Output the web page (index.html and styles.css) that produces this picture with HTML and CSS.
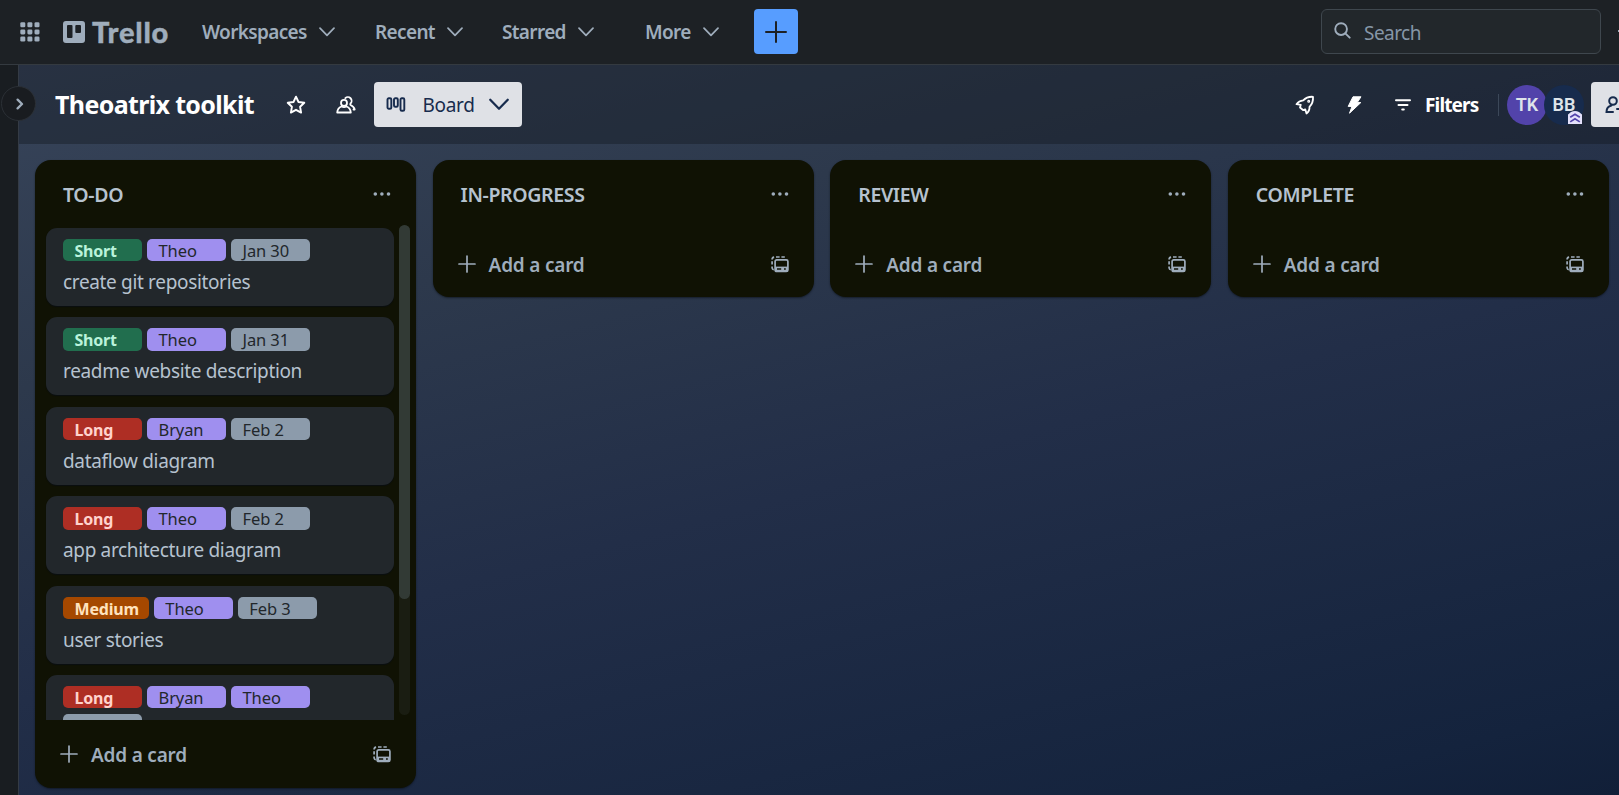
FILE: index.html
```html
<!DOCTYPE html>
<html lang="en">
<head>
<meta charset="utf-8">
<title>Theoatrix toolkit | Trello</title>
<link rel="stylesheet" href="styles.css">
</head>
<body>
<svg class="defs" width="0" height="0">
  <symbol id="chevron" viewBox="0 0 16 10"><path d="M1 1.200l7 7.200 7-7.200" fill="none" stroke="currentColor" stroke-linecap="round" stroke-linejoin="round"/></symbol>
  <symbol id="plus" viewBox="0 0 18 18"><path d="M9 1v16M1 9h16" fill="none" stroke="currentColor" stroke-width="1.700" stroke-linecap="round"/></symbol>
  <symbol id="dots" viewBox="0 0 18 6"><g fill="currentColor"><circle cx="2.300" cy="3" r="1.800"/><circle cx="8.900" cy="3" r="1.800"/><circle cx="15.500" cy="3" r="1.800"/></g></symbol>
  <symbol id="template" viewBox="0 0 18 17"><g fill="none" stroke="currentColor"><path d="M1.100 3.400q0-2 2-2.300M5 1h3.600M10.400 1h3.400M1.100 5.300v3.300M1.100 10.400v1.600q.2 1.500 1.700 1.700" stroke-width="1.700"/><rect x="4.100" y="3.900" width="12.800" height="11.600" rx="1.600" stroke-width="1.700"/></g><path d="M4 10.600h13v4.900H4z" fill="currentColor"/><path d="M6 13h4.200M13 13h1.800" stroke="#101204" stroke-width="1.400"/></symbol>
</svg>

<header class="topbar">
  <svg class="apps" viewBox="0 0 20 20"><g fill="currentColor"><rect x=".3" y=".3" width="5" height="5" rx="1.300"/><rect x="7.400" y=".3" width="5" height="5" rx="1.300"/><rect x="14.500" y=".3" width="5" height="5" rx="1.300"/><rect x=".3" y="7.400" width="5" height="5" rx="1.300"/><rect x="7.400" y="7.400" width="5" height="5" rx="1.300"/><rect x="14.500" y="7.400" width="5" height="5" rx="1.300"/><rect x=".3" y="14.500" width="5" height="5" rx="1.300"/><rect x="7.400" y="14.500" width="5" height="5" rx="1.300"/><rect x="14.500" y="14.500" width="5" height="5" rx="1.300"/></g></svg>
  <div class="logo">
    <svg viewBox="0 0 22 22"><path fill="currentColor" fill-rule="evenodd" d="M3 0h16a3 3 0 0 1 3 3v16a3 3 0 0 1-3 3H3a3 3 0 0 1-3-3V3a3 3 0 0 1 3-3zM5 4a1 1 0 0 0-1 1v11a1 1 0 0 0 1 1h3.500a1 1 0 0 0 1-1V5a1 1 0 0 0-1-1zM13.300 4a1 1 0 0 0-1 1v6a1 1 0 0 0 1 1H17a1 1 0 0 0 1-1V5a1 1 0 0 0-1-1z"/></svg>
    <span>Trello</span>
  </div>
  <nav class="menu">
    <a class="m-work"><span>Workspaces</span><svg class="chev"><use href="#chevron"/></svg></a>
    <a class="m-recent"><span>Recent</span><svg class="chev"><use href="#chevron"/></svg></a>
    <a class="m-star"><span>Starred</span><svg class="chev"><use href="#chevron"/></svg></a>
    <a class="m-more"><span>More</span><svg class="chev"><use href="#chevron"/></svg></a>
  </nav>
  <button class="create"><svg viewBox="0 0 22 22"><path d="M11 1v20M1 11h20" stroke="currentColor" stroke-width="2" stroke-linecap="round"/></svg></button>
  <div class="search">
    <svg viewBox="0 0 18 18"><circle cx="7.500" cy="7.500" r="6.200" fill="none" stroke="currentColor" stroke-width="2"/><path d="M12 12l4.600 4.600" stroke="currentColor" stroke-width="2" stroke-linecap="round"/></svg>
    <span>Search</span>
  </div>
  <i class="edge"></i>
</header>

<div class="shell">
  <aside class="rail"><button class="expand"><svg viewBox="0 0 8 12"><path d="M1.600 1.600L6 6l-4.400 4.400" fill="none" stroke="currentColor" stroke-width="2.300" stroke-linecap="round" stroke-linejoin="round"/></svg></button></aside>
  <main class="board">
    <div class="boardbar">
      <h1>Theoatrix toolkit</h1>
      <svg class="star" viewBox="0 0 20 20"><path d="M10 1.700l2.500 5.300 5.800.8-4.200 4 1 5.800-5.100-2.800-5.100 2.800 1-5.800-4.200-4 5.800-.8z" fill="none" stroke="currentColor" stroke-width="1.900" stroke-linejoin="round"/></svg>
      <svg class="people" viewBox="0 0 20 18"><g fill="none" stroke="currentColor" stroke-width="1.800" stroke-linecap="round" stroke-linejoin="round"><circle cx="8" cy="6.900" r="3"/><path d="M1.200 16.500q.3-4.600 4.300-6 2.500 1.400 5 0 4 1.400 4.300 6z"/><path d="M9.300 2.200a3.700 3.700 0 0 1 5.200 5.300q-.5.900 0 1.500 3.600 1.600 4.200 4.500h-1.200"/></g></svg>
      <button class="view">
        <svg class="cols" viewBox="0 0 20 15"><g fill="none" stroke="currentColor" stroke-width="1.900"><rect x="1.500" y="1.200" width="3.800" height="10.500" rx="1.300"/><rect x="8" y="1.200" width="3.800" height="8.500" rx="1.300"/><rect x="14.500" y="1.200" width="3.800" height="12.500" rx="1.300"/></g></svg>
        <span>Board</span>
        <svg class="vchev"><use href="#chevron"/></svg>
      </button>
      <div class="tools">
        <svg class="rocket" viewBox="0 0 20 20"><g fill="none" stroke="currentColor" stroke-width="1.800" stroke-linejoin="round" stroke-linecap="round"><path d="M18 1.800Q12 1.400 8.200 5.400Q4 5.700 1.500 9.200L5.800 9.800 5 12.500l3.300 2.700 2-.8 1.200 4.100Q14.800 16 14.500 11.800 18.500 8 18 1.800z"/><circle cx="13.700" cy="6.200" r=".6"/></g></svg>
        <svg class="bolt" viewBox="0 0 15 18"><path d="M6 .8h8L10.200 6.600h3.600L2.500 17.200 5 10.400H1.200z" fill="currentColor" stroke="currentColor" stroke-linejoin="round"/></svg>
        <svg class="filter" viewBox="0 0 16 12"><path d="M1 1.200h14M3.500 6h9M7.200 10.600h1.600" stroke="currentColor" stroke-width="2" stroke-linecap="round"/></svg>
        <span class="filters">Filters</span>
        <i class="sep"></i>
        <span class="avatar tk">TK</span>
        <span class="avatar bb">BB<svg class="badge" viewBox="0 0 14 13"><path d="M0 3.500L3 1Q7-1 11 1l3 2.500V13H0z" fill="#e4e1fb"/><path d="M2.200 6.300L7 3.200l4.800 3.100M2.200 10.900L7 7.800l4.800 3.100" fill="none" stroke="#5243aa" stroke-width="1.700"/></svg></span>
        <button class="share"><svg viewBox="0 0 20 18"><g fill="none" stroke="currentColor" stroke-width="2" stroke-linecap="round"><circle cx="8" cy="5" r="3.800"/><path d="M8 16H1.500q0-5.500 5-6.500M16 9v8M12 13h8"/></g></svg></button>
      </div>
    </div>

    <div class="lists">
      <section class="list tall">
        <div class="head"><h2>TO-DO</h2><svg class="dots"><use href="#dots"/></svg></div>
        <div class="scroller">
          <div class="cards">
            <article class="card"><div class="labels"><b class="short">Short</b><b class="who">Theo</b><b class="date">Jan 30</b></div><p>create git repositories</p></article>
            <article class="card"><div class="labels"><b class="short">Short</b><b class="who">Theo</b><b class="date">Jan 31</b></div><p>readme website description</p></article>
            <article class="card"><div class="labels"><b class="long">Long</b><b class="who">Bryan</b><b class="date">Feb 2</b></div><p>dataflow diagram</p></article>
            <article class="card"><div class="labels"><b class="long">Long</b><b class="who">Theo</b><b class="date">Feb 2</b></div><p>app architecture diagram</p></article>
            <article class="card"><div class="labels"><b class="medium">Medium</b><b class="who">Theo</b><b class="date">Feb 3</b></div><p>user stories</p></article>
            <article class="card"><div class="labels"><b class="long">Long</b><b class="who">Bryan</b><b class="who">Theo</b><b class="date">Feb 5</b></div></article>
          </div>
          <div class="track"><i></i></div>
        </div>
        <div class="foot"><svg class="plus"><use href="#plus"/></svg><span>Add a card</span><svg class="tpl"><use href="#template"/></svg></div>
      </section>
      <section class="list">
        <div class="head"><h2>IN-PROGRESS</h2><svg class="dots"><use href="#dots"/></svg></div>
        <div class="foot"><svg class="plus"><use href="#plus"/></svg><span>Add a card</span><svg class="tpl"><use href="#template"/></svg></div>
      </section>
      <section class="list">
        <div class="head"><h2>REVIEW</h2><svg class="dots"><use href="#dots"/></svg></div>
        <div class="foot"><svg class="plus"><use href="#plus"/></svg><span>Add a card</span><svg class="tpl"><use href="#template"/></svg></div>
      </section>
      <section class="list">
        <div class="head"><h2>COMPLETE</h2><svg class="dots"><use href="#dots"/></svg></div>
        <div class="foot"><svg class="plus"><use href="#plus"/></svg><span>Add a card</span><svg class="tpl"><use href="#template"/></svg></div>
      </section>
    </div>
  </main>
</div>
</body>
</html>
```
FILE: styles.css
```css
* { box-sizing: border-box; }
body {
  margin: 0;
  width: 1619px;
  height: 795px;
  overflow: hidden;
  display: flex;
  flex-direction: column;
  font-family: "Noto Sans", "Open Sans", sans-serif;
  font-size: 19px;
  color: #b6c2cf;
  background: #1d2125;
}
h1, h2, p { margin: 0; }
button { border: 0; padding: 0; margin: 0; font: inherit; }
svg { display: block; flex: none; }
.defs { position: absolute; }

/* Top navigation */
.topbar {
  height: 65px;
  flex: none;
  display: flex;
  align-items: center;
  border-bottom: 1px solid #343a40;
  padding-left: 20px;
  color: #9fadbc;
  overflow: hidden;
}
.apps { width: 20px; height: 20px; }
.logo { display: flex; align-items: center; margin-left: 23px; width: 139px; }
.logo svg { width: 22px; height: 22px; }
.logo span {
  margin-left: 7px;
  font-family: Lato, sans-serif;
  font-weight: 900;
  font-size: 29px;
  line-height: 30px;
  letter-spacing: .8px;
  -webkit-text-stroke: .4px currentColor;
}
.menu { display: flex; font-weight: 600; line-height: 26px; white-space: nowrap; letter-spacing: -.65px; }
.menu a { display: flex; align-items: center; justify-content: space-between; }
.m-work { width: 133px; margin-right: 40px; }
.m-recent { width: 88px; margin-right: 39px; }
.m-star { width: 92px; margin-right: 51px; }
.m-more { width: 74px; }
.chev { width: 16px; height: 10px; stroke-width: 1.7; }
.create {
  width: 44px;
  height: 45px;
  margin-left: 35px;
  margin-top: -1px;
  border-radius: 4px;
  background: #579dff;
  color: #1d2125;
  display: grid;
  place-items: center;
}
.create svg { width: 22px; height: 22px; }
.search {
  width: 280px;
  height: 45px;
  margin-left: auto;
  margin-top: -1px;
  border: 1px solid #3f474e;
  border-radius: 6px;
  background: #22272b;
  display: flex;
  align-items: center;
  padding-left: 12px;
  color: #8696a7;
}
.search svg { width: 17px; height: 17px; margin-top: -2px; color: #9fadbc; }
.search span { margin-left: 13px; padding-top: 2px; letter-spacing: -.55px; }
.edge { width: 1px; height: 2px; margin-left: 17px; margin-top: -3px; background: #9fadbc; }

.shell { flex: 1; display: flex; min-height: 0; }
.rail { width: 19px; flex: none; position: relative; border-right: 1px solid #343b45; background: #191d21; }
.expand {
  position: absolute;
  left: 1px;
  top: 21px;
  width: 35px;
  height: 35px;
  border-radius: 50%;
  border: 1px solid #2b3036;
  background: #191c20;
  color: #9fadbc;
  display: grid;
  place-items: center;
  z-index: 2;
}
.expand svg { width: 8px; height: 12px; margin-left: 2px; }
.board {
  flex: 1;
  min-width: 0;
  background: linear-gradient(165deg, #37445a 0%, #2d394c 28%, #222e48 55%, #14233d 92%, #111f38 100%);
  display: flex;
  flex-direction: column;
}

/* Board header */
.boardbar {
  height: 79px;
  flex: none;
  display: flex;
  align-items: center;
  background: rgba(18, 22, 30, .4);
  color: #fff;
  padding-left: 36px;
  overflow: hidden;
}
h1 { width: 200px; margin-top: -2px; font-size: 25px; font-weight: 700; letter-spacing: -.65px; white-space: nowrap; line-height: 34px; }
.star { width: 20px; height: 20px; margin-left: 31px; }
.people { width: 20px; height: 18px; margin-left: 30px; }
.view {
  margin-left: 18px;
  width: 148px;
  height: 45px;
  border-radius: 4px;
  background: #dfe1e6;
  color: #172b4d;
  display: flex;
  align-items: center;
}
.cols { width: 20px; height: 15px; margin-left: 12px; }
.view span { width: 53px; margin-left: 16px; letter-spacing: -.3px; }
.vchev { width: 20px; height: 13px; margin-left: 14px; stroke-width: 1.8; }
.tools { margin-left: auto; display: flex; align-items: center; }
.rocket { width: 20px; height: 20px; }
.bolt { width: 15px; height: 18px; margin-left: 32px; }
.filter { width: 16px; height: 12px; margin-left: 33px; }
.filters { margin-left: 14px; width: 54px; font-weight: 700; letter-spacing: -.85px; }
.sep { width: 1px; height: 22px; background: #3c4859; margin-left: 19px; }
.avatar {
  position: relative;
  width: 40px;
  height: 40px;
  border-radius: 50%;
  display: grid;
  place-items: center;
  font-family: Roboto, sans-serif;
  font-size: 18px;
  font-weight: 600;
  color: #dee4ea;
}
.tk { margin-left: 8px; background: #5243aa; }
.bb { margin-left: -3px; background: #172b4d; }
.badge { position: absolute; width: 14px; height: 13px; right: 2px; bottom: 1px; }
.share {
  width: 28px;
  height: 45px;
  margin-left: 7px;
  border-radius: 4px 0 0 4px;
  background: #dfe1e6;
  color: #172b4d;
  overflow: hidden;
  display: flex;
  align-items: center;
  padding-left: 14px;
}
.share svg { width: 20px; height: 18px; }

/* Lists */
.lists { flex: 1; min-height: 0; display: flex; align-items: flex-start; gap: 16.6px; padding: 16px 0 0 16px; }
.list {
  width: 381px;
  height: 137px;
  flex: none;
  border-radius: 16px;
  background: #101204;
  box-shadow: 0 1px 2px rgba(9, 14, 20, .6);
  display: flex;
  flex-direction: column;
}
.list.tall { height: 628px; }
.head { height: 65px; flex: none; display: flex; align-items: center; justify-content: space-between; padding: 5px 25px 0 28px; }
.head h2 { font-size: 19.5px; font-weight: 600; letter-spacing: -.35px; line-height: 28px; }
.dots { width: 18px; height: 6px; margin-top: -3px; color: #9fadbc; }
.foot {
  margin-top: auto;
  height: 64px;
  flex: none;
  display: flex;
  align-items: center;
  padding: 0 25px 0 25px;
  color: #9fadbc;
  font-weight: 600;
}
.tall .foot { height: 66px; }
.plus { width: 18px; height: 18px; margin-top: -2px; }
.foot span { margin-left: 13px; letter-spacing: -.2px; }
.tpl { width: 18px; height: 17px; margin-left: auto; margin-top: -1px; }
.scroller { height: 495px; flex: none; display: flex; }
.cards { width: 359px; height: 495px; padding: 3px 0 0 11px; overflow: hidden; }
.card {
  width: 348px;
  height: 78px;
  margin-bottom: 11.4px;
  padding: 11px 17px 0;
  border-radius: 11px;
  background: #22272b;
  box-shadow: 0 1px 1px rgba(9, 14, 20, .8);
}
.labels { display: flex; flex-wrap: wrap; gap: 6px 5px; }
.labels b {
  min-width: 79px;
  height: 22.4px;
  line-height: 24px;
  border-radius: 5px;
  padding: 0 10px 0 11.5px;
  font-size: 16.5px;
  font-weight: 400;
  letter-spacing: -.1px;
}
.labels .short, .labels .long, .labels .medium { font-weight: 700; font-size: 16px; letter-spacing: -.2px; }
.labels .short { background: #216e4e; color: #baf3db; }
.labels .long { background: #ae2e24; color: #ffd2cc; }
.labels .medium { background: #a54800; color: #ffe2bd; }
.labels .who { background: #9f8fef; color: #22272b; }
.labels .date { background: #8c9bab; color: #22272b; }
.card p { margin-top: 6.6px; line-height: 28px; letter-spacing: -.34px; white-space: nowrap; }
.track { width: 11px; height: 490px; margin-left: 5px; border-radius: 6px; background: #1a1d12; }
.track i { display: block; height: 374px; border-radius: 6px; background: #323a35; }
```
